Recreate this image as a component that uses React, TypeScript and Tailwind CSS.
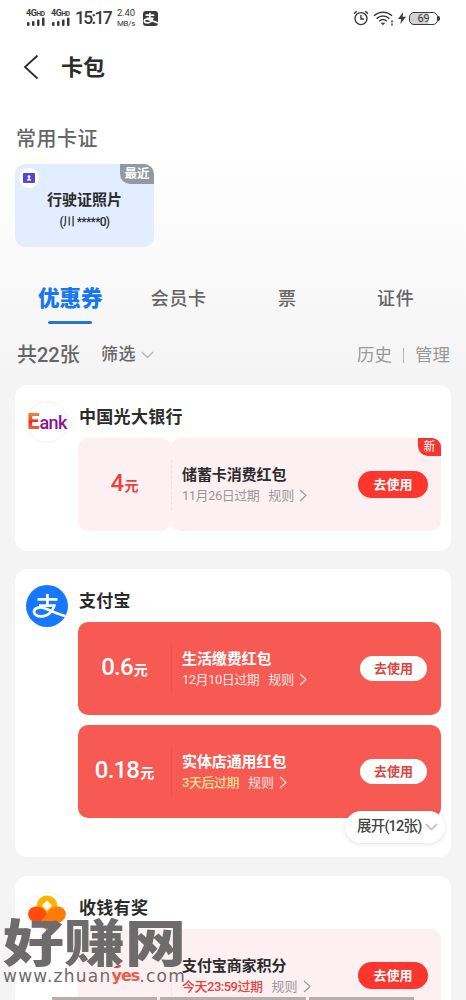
import { ReactNode } from 'react'
import clsx from 'clsx'

type Coupon = {
  amount: string
  title: string
  expire: string
  expireClass?: string
  solid?: boolean
  isNew?: boolean
}

const tabs = ['优惠券', '会员卡', '票', '证件']

const Signal = () => (
  <div className="flex w-5 flex-col items-start">
    <p className="h-[7px] whitespace-nowrap text-[9px] leading-[7px] font-bold tracking-[-0.4px]">4G<span className="text-[6.5px]">HD</span></p>
    <svg width="19" height="9" viewBox="0 0 19 9" fill="#3a3a3a">
      <rect x="1" y="5" width="2.5" height="4" rx="1" />
      <rect x="6" y="4" width="2.5" height="5" rx="1" />
      <rect x="11" y="2.5" width="2.5" height="6.5" rx="1" />
      <rect x="16" y="0.5" width="2.5" height="8.5" rx="1" />
    </svg>
  </div>
)

const AlipayGlyph = ({ className }: { className?: string }) => (
  <svg viewBox="0 0 42 42" className={className} fill="none" stroke="currentColor">
    <path d="M11.5 14.4H31.5M21.4 9V20.5" strokeWidth="2.8" />
    <path d="M13 20.7H28.3C27 25.5 22.5 31.5 15.5 31.5C10.5 31.5 7.8 29 8 26.4C8.3 23 13.5 21.5 18.5 23.2C24.5 25.2 32 29.5 41.5 31.5" strokeWidth="2.7" />
  </svg>
)

const StatusBar = () => (
  <div className="flex h-9 items-center pl-[26px] pr-[26px] text-[#3a3a3a]">
    <Signal />
    <div className="w-[5px]" />
    <Signal />
    <p className="ml-[4px] w-[37px] text-[17.5px] font-medium tracking-[-1.7px] whitespace-nowrap">15:17</p>
    <div className="ml-[4px] w-5 text-center text-[9.5px] leading-[11px] tracking-[-0.1px] whitespace-nowrap">
      <p>2.40</p>
      <p className="text-[8px] tracking-[-0.3px]">MB/s</p>
    </div>
    <div className="ml-[7px] h-[15px] w-[15px] rounded-[3px] bg-[#3a3a3a] text-white">
      <svg viewBox="5 4 36 34" className="h-full w-full" fill="none" stroke="currentColor" strokeWidth="4">
        <path d="M11 13H32M21.4 7V20M13 20.7H28.3C27 25.5 22.5 31.5 15.5 31.5C10.5 31.5 7.8 29 8 26.4C8.3 23 13.5 21.5 18.5 23.2C24.5 25.2 32 29.5 41.5 31.5" />
      </svg>
    </div>
    <div className="ml-auto flex items-center">
      <svg width="16" height="16" viewBox="0 0 16 16" fill="none" stroke="#3a3a3a" strokeWidth="1.4">
        <circle cx="8" cy="8.6" r="6" />
        <path d="M8 5v4h3M1 3.6L3.8 1.2M15 3.6L12.2 1.2" />
      </svg>
      <svg className="ml-1" width="21" height="15" viewBox="0 0 21 15" fill="none" stroke="#3a3a3a" strokeWidth="1.5">
        <path d="M1 4.8C6-.1 14-.1 19 4.8M3.6 7.6c3.8-3.5 9-3.5 12.8 0M6.2 10.2c2.3-2 5.3-2 7.6 0" />
        <path d="M7.6 11.8L10 14.2l2.4-2.4z" fill="#3a3a3a" stroke="none" />
        <path d="M19 9.5v2M19 12.5v2" />
      </svg>
      <svg className="ml-1" width="8" height="12" viewBox="0 0 8 12" fill="#3a3a3a">
        <path d="M5.2 0L0 7h3.2L2.4 12L8 4.8H4.6z" />
      </svg>
      <div className="ml-[3px] flex h-[13px] w-[29px] items-center justify-center rounded-[5px] border-[1.5px] border-[#3a3a3a] bg-linear-to-r from-[#d2d2d2] from-65% to-white to-65% text-[11px] leading-none tracking-[-0.3px]">69</div>
      <div className="h-[5px] w-[2px] rounded-r bg-[#3a3a3a]" />
    </div>
  </div>
)

const RuleArrow = () => (
  <svg className="ml-[5px]" width="8" height="13" viewBox="0 0 8 13" fill="none" stroke="currentColor" strokeWidth="1.1">
    <path d="M1 1l6 5.5L1 12" />
  </svg>
)

const DownArrow = ({ className }: { className?: string }) => (
  <svg className={className} width="13" height="8" viewBox="0 0 13 8" fill="none" stroke="#b5b5b5" strokeWidth="1.3">
    <path d="M1 1l5.5 5.5L12 1" />
  </svg>
)

const UseButton = ({ solid }: { solid?: boolean }) => (
  <button
    className={clsx(
      'flex items-center justify-center rounded-full text-[13px] font-bold',
      solid ? 'mr-[14px] h-[25px] w-[67px] bg-white text-[#d9473f]' : 'mr-[13px] h-[27px] w-[70px] bg-[#fc352d] text-white'
    )}
  >
    去使用
  </button>
)

const CouponRow = ({ amount, title, expire, expireClass, solid, isNew }: Coupon) => (
  <div className={clsx('relative flex h-[93px] shrink-0 rounded-[10px]', solid ? 'bg-[#f65a53] text-white' : 'text-[#2c2c2c]')}>
    <div className={clsx('flex w-[93px] items-center justify-center rounded-[10px]', !solid && 'bg-[#fdf0f2] text-[#e8433b]')}>
      <p className="flex items-baseline whitespace-nowrap">
        <span className="text-[24px] font-medium leading-7 tracking-[-0.8px]">{amount}</span>
        <span className="ml-px text-[14px] font-bold leading-7">元</span>
      </p>
    </div>
    <div className={clsx('flex flex-1 items-center rounded-[10px]', !solid && 'bg-[#fdf0f2]')}>
      <div className={clsx('h-[50px] border-l', solid ? 'border-[#e9544e]' : 'border-dashed border-[#f5dfe2]')} />
      <div className="ml-[10px] flex-1">
        <p className="text-[15px] leading-[22px] font-bold tracking-[-0.1px] whitespace-nowrap">{title}</p>
        <div className={clsx('flex h-[20px] items-center whitespace-nowrap text-[13px] leading-5', solid ? 'text-[#ffe6e4]' : 'text-[#999]')}>
          <span className={clsx('tracking-[-0.5px]', expireClass)}>{expire}</span>
          <span className="ml-[9px]">规则</span>
          <RuleArrow />
        </div>
      </div>
      <UseButton solid={solid} />
    </div>
    {isNew && (
      <div className="absolute right-0 top-0 flex h-[18px] w-[23px] items-center justify-center rounded-tr-[9px] rounded-bl-[10px] bg-[#f4342d] text-[12px] text-white">新</div>
    )}
  </div>
)

const ShopCard = ({ logo, name, className, children }: { logo: ReactNode; name: string; className: string; children: ReactNode }) => (
  <section className={clsx('relative mx-[15px] flex rounded-[12px] bg-white pl-[11px] pr-[10px]', className)}>
    <div className="mt-4 flex h-[42px] w-[42px] shrink-0 items-center justify-center">{logo}</div>
    <div className="ml-[10px] flex flex-1 flex-col">
      <h2 className="mt-[18px] mb-[7px] ml-px h-7 text-[17px] leading-7 font-bold tracking-[0.3px] text-[#2c2c2c]">{name}</h2>
      <div className="flex flex-col gap-[10px]">{children}</div>
    </div>
  </section>
)

const BankLogo = () => (
  <div className="flex h-[42px] w-[42px] items-center justify-center rounded-full border border-[#f3f3f3]">
    <p className="flex items-baseline whitespace-nowrap leading-none font-bold">
      <span className="bg-linear-to-b from-[#f39b35] via-[#e62a2a] to-[#f0803c] bg-clip-text text-[22px] leading-none font-black text-transparent">E</span>
      <span className="text-[18px] leading-none font-medium tracking-[-0.6px] text-[#8b1290]">ank</span>
    </p>
  </div>
)

const RewardLogo = () => (
  <svg width="42" height="42" viewBox="0 0 42 42">
    <circle cx="21" cy="21" r="20.5" fill="#fff" stroke="#f4f4f4" />
    <circle cx="21" cy="14" r="10.5" fill="#ffb400" />
    <path d="M21 38L6 29C-1 24 2 14.500 10.500 14.500C15 14.500 19 17 21 22z" fill="#ff4b0b" />
    <path d="M21 38L36 29C43 24 40 14.500 31.500 14.500C27 14.500 23 17 21 22L15 29z" fill="#ff7b08" />
    <path d="M21 8.500L26 13.500L21 18.500L16 13.500z" fill="#fff" />
  </svg>
)

const Watermark = () => (
  <div className="pointer-events-none absolute left-[3px] top-[918px] whitespace-nowrap text-[#6d6b6b]">
    <p className="h-[50px] origin-top scale-y-[0.83] text-[61px] leading-[64px] font-black">好赚网</p>
    <p className="relative flex h-4 w-[184px] items-center text-[17px] leading-4 tracking-[1.25px] [font-family:'DejaVu_Sans',sans-serif]">
      <span>www.zhuan</span>
      <span className="h-[17px] bg-[#fdf0f2] text-[16px] leading-[15px] font-bold tracking-[-1px] text-[#f05b46]">yes</span>
      <span>.com</span>
    </p>
  </div>
)

const App = () => {
  return (
    <div className="relative h-[1000px] w-[466px] overflow-hidden bg-[#f4f4f4] bg-linear-to-b from-white from-15% to-[#f4f4f4] to-38% [font-family:Roboto,'Noto_Sans_CJK_SC',sans-serif]">
      <StatusBar />
      <header className="flex h-[62px] items-center text-[#2c2c2c]">
        <svg className="ml-[23px]" width="16" height="26" viewBox="0 0 16 26" fill="none" stroke="currentColor" strokeWidth="1.8">
          <path d="M14.5 1.5L2 13l12.5 11.5" />
        </svg>
        <h1 className="ml-[22px] text-[22px] font-bold">卡包</h1>
      </header>

      <h2 className="mt-[26px] ml-4 h-[30px] text-[20px] leading-[30px] font-medium tracking-[0.5px] text-[#666]">常用卡证</h2>
      <div className="relative mt-[10px] ml-[15px] flex h-[83px] w-[139px] flex-col items-center rounded-[10px] bg-[#e2eeff] text-[#2c2c2c]">
        <div className="absolute left-[4px] top-[4px] flex h-5 w-5 items-center justify-center rounded-full bg-white">
          <svg width="12" height="10" viewBox="0 0 12 10">
            <rect width="12" height="10" rx="1" fill="#5146d8" />
            <circle cx="6" cy="3.6" r="1.4" fill="#fff" />
            <path d="M3.5 7.5L6 4.5l2.5 3z" fill="#fff" />
          </svg>
        </div>
        <div className="absolute right-0 top-0 flex h-5 w-[34px] items-center justify-center rounded-tr-[10px] rounded-bl-[10px] bg-[#9299a3] text-[12.5px] font-bold text-white">最近</div>
        <p className="mt-[25px] text-[15px] leading-[22px] font-bold">行驶证照片</p>
        <p className="text-[12px] leading-[22px] font-medium tracking-[-0.7px]">(川 *****0)</p>
      </div>

      <nav className="mt-[34px] ml-4 grid h-[43px] w-[434px] grid-cols-4 text-[#666]">
        {tabs.map((tab, i) => (
          <div key={tab} className="flex flex-col items-center">
            <span className={clsx('h-[36px] leading-9 whitespace-nowrap', i === 0 ? 'text-[21.5px] font-black text-[#1677ee]' : 'text-[18px] font-medium tracking-[0.7px]')}>{tab}</span>
            {i === 0 && <span className="mt-[4px] h-[3px] w-11 rounded-full bg-[#2477d5]" />}
          </div>
        ))}
      </nav>

      <div className="mt-[16px] flex h-[30px] items-center pr-4 pl-[17px] text-[#666]">
        <span className="w-[84px] text-[20px] font-medium">共22张</span>
        <span className="text-[17px] font-medium tracking-[0.5px]">筛选</span>
        <DownArrow className="ml-[5px]" />
        <span className="ml-auto text-[17.5px] text-[#999]">历史</span>
        <span className="mx-[11px] h-[15px] w-px bg-[#b5b5b5]" />
        <span className="text-[17.5px] text-[#999]">管理</span>
      </div>

      <ShopCard logo={<BankLogo />} name="中国光大银行" className="mt-[15px] h-[166px]">
        <CouponRow amount="4" title="储蓄卡消费红包" expire="11月26日过期" isNew />
      </ShopCard>

      <ShopCard
        logo={<div className="h-[42px] w-[42px] overflow-hidden rounded-full bg-[#1677ff] text-white"><AlipayGlyph /></div>}
        name="支付宝"
        className="mt-[18px] h-[288px]"
      >
        <CouponRow amount="0.6" title="生活缴费红包" expire="12月10日过期" solid />
        <CouponRow amount="0.18" title="实体店通用红包" expire="3天后过期" expireClass="text-[#ffdf96] font-medium" solid />
        <div className="absolute right-[6px] bottom-[14px] flex h-[32px] w-[100px] items-center rounded-full bg-white pl-3 shadow-[0_1px_4px_rgba(0,0,0,0.12)]">
          <span className="text-[14.5px] font-medium tracking-[-0.8px] whitespace-nowrap text-[#444]">展开(12张)</span>
          <DownArrow className="ml-[4px] shrink-0" />
        </div>
      </ShopCard>

      <ShopCard logo={<RewardLogo />} name="收钱有奖" className="mt-[19px] h-[166px]">
        <CouponRow amount="6" title="支付宝商家积分" expire="今天23:59过期" expireClass="text-[#e8433b] font-medium" />
      </ShopCard>

      <div className="absolute top-[997px] left-[52px] flex h-[3px] gap-[3px]">
        <span className="w-[105px] bg-[#b5adae]" />
        <span className="w-[146px] bg-[#b5adae]" />
        <span className="w-[105px] bg-[#b5adae]" />
      </div>
      <Watermark />
    </div>
  )
}

export default App
